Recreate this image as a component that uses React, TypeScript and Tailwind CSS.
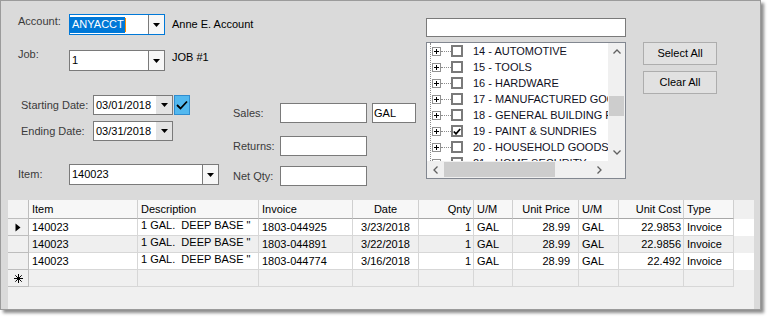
import React from 'react';

const Tri = () => (
  <svg width="7" height="4" viewBox="0 0 7 4">
    <path d="M0 0H7L3.5 4Z" fill="#000" />
  </svg>
);

const Chevron = ({ dir }: { dir: 'up' | 'down' | 'left' | 'right' }) => {
  const pts: Record<string, string> = {
    up: '0.5,4.5 4,1 7.5,4.5',
    down: '0.5,0.5 4,4 7.5,0.5',
    left: '4.5,0.5 1,4 4.5,7.5',
    right: '0.5,0.5 4,4 0.5,7.5',
  };
  const vertical = dir === 'up' || dir === 'down';
  return (
    <svg width={vertical ? 8 : 5} height={vertical ? 5 : 8} viewBox={vertical ? '0 0 8 5' : '0 0 5 8'}>
      <polyline points={pts[dir]} fill="none" stroke="#606060" strokeWidth="1.3" />
    </svg>
  );
};

const Plus = () => (
  <div className="flex h-[9px] w-[9px] shrink-0 items-center justify-center border border-[#919191] bg-white">
    <svg width="7" height="7" viewBox="0 0 7 7">
      <path d="M1 3.5H6M3.5 1V6" stroke="#000" strokeWidth="1" />
    </svg>
  </div>
);

const treeRows = [
  { t: '14 - AUTOMOTIVE', c: false },
  { t: '15 - TOOLS', c: false },
  { t: '16 - HARDWARE', c: false },
  { t: '17 - MANUFACTURED GOODS', c: false },
  { t: '18 - GENERAL BUILDING PRODUCTS', c: false },
  { t: '19 - PAINT & SUNDRIES', c: true },
  { t: '20 - HOUSEHOLD GOODS', c: false },
  { t: '21 - HOME SECURITY', c: false },
];

const cols = [
  { h: 'Item', w: 'w-[109px]', a: 'justify-start pl-[3px]' },
  { h: 'Description', w: 'w-[121px]', a: 'justify-start pl-[3px]' },
  { h: 'Invoice', w: 'w-[94px]', a: 'justify-start pl-[3px]' },
  { h: 'Date', w: 'w-[66px]', a: 'justify-center' },
  { h: 'Qnty', w: 'w-[55px]', a: 'justify-end pr-[2px]' },
  { h: 'U/M', w: 'w-[39px]', a: 'justify-start pl-[3px]' },
  { h: 'Unit Price', w: 'w-[66px]', a: 'justify-end pr-[8px]' },
  { h: 'U/M', w: 'w-[40px]', a: 'justify-start pl-[3px]' },
  { h: 'Unit Cost', w: 'w-[65px]', a: 'justify-end pr-[2px]' },
  { h: 'Type', w: 'w-[50px]', a: 'justify-start pl-[3px]' },
];

const rows = [
  ['140023', '1 GAL.  DEEP BASE "', '1803-044925', '3/23/2018', '1', 'GAL', '28.99', 'GAL', '22.9853', 'Invoice'],
  ['140023', '1 GAL.  DEEP BASE "', '1803-044891', '3/22/2018', '1', 'GAL', '28.99', 'GAL', '22.9856', 'Invoice'],
  ['140023', '1 GAL.  DEEP BASE "', '1803-044774', '3/16/2018', '1', 'GAL', '28.99', 'GAL', '22.492', 'Invoice'],
];

function DateBox({ value }: { value: string }) {
  return (
    <div className="flex h-[20px] w-[80px] shrink-0 border border-[#7a7a7a] bg-white">
      <div className="flex flex-1 items-center pl-[2px] text-black">{value}</div>
      <div className="flex w-[16px] items-center justify-center bg-[#e3e3e3]">
        <Tri />
      </div>
    </div>
  );
}

function TextBox({ w, value }: { w: string; value?: string }) {
  return (
    <div className={`flex h-[20px] shrink-0 items-center border border-[#7a7a7a] bg-white pl-[1px] text-black ${w}`}>
      {value}
    </div>
  );
}

export default function App() {
  return (
    <div className="h-[317px] w-[769px] bg-white font-['Liberation_Sans',Arial,sans-serif] text-[11px] leading-[13px] text-black">
      <div className="flex h-[310px] w-[761px] flex-col border border-[#9b9b9b] bg-[#dadada] shadow-[3px_3px_3px_rgba(0,0,0,0.45)]">
        {/* top area */}
        <div className="flex h-[199px] shrink-0 items-start">
          {/* left column */}
          <div className="flex w-[232px] shrink-0 flex-col">
            {/* Account */}
            <div className="mt-[13px] flex items-start whitespace-nowrap">
              <div className="mt-[1px] w-[68px] shrink-0 pl-[17px] text-[#3a3a3a]">Account:</div>
              <div className="flex h-[21px] w-[96px] shrink-0 border border-[#0078d7] bg-white">
                <div className="flex flex-1 items-center">
                  <span className="flex h-[16px] items-center bg-[#0078d7] pl-[2px] pr-[1px] text-white">ANYACCT</span>
                  <span className="h-[14px] w-[1px] bg-[#ff8c00]" />
                </div>
                <div className="flex w-[16px] items-center justify-center border-l border-[#7a7a7a] bg-[#f7f7f7]">
                  <Tri />
                </div>
              </div>
              <div className="ml-[7px] mt-[4px] shrink-0">Anne E. Account</div>
            </div>
            {/* Job */}
            <div className="mt-[15px] flex items-start whitespace-nowrap">
              <div className="mt-[-2px] w-[68px] shrink-0 pl-[17px] text-[#3a3a3a]">Job:</div>
              <div className="flex h-[21px] w-[96px] shrink-0 border border-[#7a7a7a] bg-white">
                <div className="flex flex-1 items-center pl-[2px]">1</div>
                <div className="flex w-[16px] items-center justify-center border-l border-[#7a7a7a] bg-[#f7f7f7]">
                  <Tri />
                </div>
              </div>
              <div className="ml-[7px] mt-[1px] shrink-0">JOB #1</div>
            </div>
            {/* Starting date */}
            <div className="mt-[24px] flex items-center whitespace-nowrap">
              <div className="w-[92px] shrink-0 pl-[20px] text-[#3a3a3a]">Starting Date:</div>
              <DateBox value="03/01/2018" />
              <div className="ml-[1px] flex h-[20px] w-[16px] shrink-0 items-center justify-center border border-[#2f8ccf] bg-[#52b8ef]">
                <svg width="12" height="10" viewBox="0 0 12 10">
                  <polyline points="1,5 4.5,8.5 11,1.5" fill="none" stroke="#000" strokeWidth="1.8" />
                </svg>
              </div>
            </div>
            {/* Ending date */}
            <div className="mt-[6px] flex items-center whitespace-nowrap">
              <div className="w-[92px] shrink-0 pl-[20px] text-[#3a3a3a]">Ending Date:</div>
              <DateBox value="03/31/2018" />
            </div>
            {/* Item */}
            <div className="mt-[23px] flex items-center whitespace-nowrap">
              <div className="w-[68px] shrink-0 pl-[17px] text-[#3a3a3a]">Item:</div>
              <div className="flex h-[21px] w-[150px] shrink-0 border border-[#7a7a7a] bg-white">
                <div className="flex flex-1 items-center pl-[2px]">140023</div>
                <div className="flex w-[16px] items-center justify-center border-l border-[#7a7a7a] bg-[#f7f7f7]">
                  <Tri />
                </div>
              </div>
            </div>
          </div>

          {/* middle column */}
          <div className="flex w-[183px] shrink-0 flex-col whitespace-nowrap">
            <div className="mt-[102px] flex items-center">
              <div className="w-[47px] shrink-0 text-[#3a3a3a]">Sales:</div>
              <TextBox w="w-[87px]" />
              <div className="ml-[5px] shrink-0">
                <TextBox w="w-[44px]" value="GAL" />
              </div>
            </div>
            <div className="mt-[13px] flex items-center">
              <div className="w-[47px] shrink-0 text-[#3a3a3a]">Returns:</div>
              <TextBox w="w-[87px]" />
            </div>
            <div className="mt-[10px] flex items-center">
              <div className="w-[47px] shrink-0 text-[#3a3a3a]">Net Qty:</div>
              <TextBox w="w-[87px]" />
            </div>
          </div>

          {/* tree column */}
          <div className="ml-[10px] flex w-[200px] shrink-0 flex-col">
            <div className="mt-[17px] h-[19px] w-[200px] border border-[#7a7a7a] bg-white" />
            <div className="mt-[5px] flex h-[137px] w-[200px] flex-col border border-[#828790] bg-white">
              <div className="flex h-[118px]">
                <div className="relative min-w-0 flex-1 overflow-hidden">
                  <div className="absolute bottom-0 left-[3px] top-0 border-l border-dotted border-[#8c8c8c]" />
                  {treeRows.map((r) => (
                    <div key={r.t} className="relative flex h-[16px] items-center whitespace-nowrap pl-[5px]">
                      <Plus />
                      <div className="h-0 w-[10px] shrink-0 border-t border-dotted border-[#8c8c8c]" />
                      <div className="flex h-[12px] w-[12px] shrink-0 items-center justify-center border-2 border-[#7a7a7a] bg-white">
                        {r.c && (
                          <svg width="8" height="7" viewBox="0 0 8 7">
                            <polyline points="0.8,3.5 3,5.8 7.2,1" fill="none" stroke="#000" strokeWidth="1.8" />
                          </svg>
                        )}
                      </div>
                      <span className="ml-[10px] shrink-0 text-[#10101e]">{r.t}</span>
                    </div>
                  ))}
                </div>
                <div className="flex w-[17px] shrink-0 flex-col items-center bg-[#f0f0f0]">
                  <div className="flex h-[17px] w-full items-center justify-center">
                    <Chevron dir="up" />
                  </div>
                  <div className="mt-[36px] h-[20px] w-[15px] bg-[#cdcdcd]" />
                  <div className="flex-1" />
                  <div className="flex h-[17px] w-full items-center justify-center">
                    <Chevron dir="down" />
                  </div>
                </div>
              </div>
              <div className="flex h-[17px]">
                <div className="flex flex-1 items-center bg-[#f0f0f0]">
                  <div className="flex h-[17px] w-[17px] items-center justify-center">
                    <Chevron dir="left" />
                  </div>
                  <div className="h-[15px] w-[111px] bg-[#cdcdcd]" />
                  <div className="flex-1" />
                  <div className="flex h-[17px] w-[17px] items-center justify-center">
                    <Chevron dir="right" />
                  </div>
                </div>
                <div className="w-[17px] bg-[#f0f0f0]" />
              </div>
            </div>
          </div>

          {/* buttons */}
          <div className="ml-[17px] mt-[41px] flex shrink-0 flex-col">
            <button className="flex h-[23px] w-[74px] items-center justify-center border border-[#adadad] bg-[#e1e1e1] text-black">
              Select All
            </button>
            <button className="mt-[6px] flex h-[23px] w-[74px] items-center justify-center border border-[#adadad] bg-[#e1e1e1] text-black">
              Clear All
            </button>
          </div>
        </div>

        {/* grid */}
        <div className="ml-[7px] mr-[6px] flex flex-1 flex-col bg-[#f0f0f0]">
          <div className="flex h-[19px]">
            <div className="w-[21px] shrink-0 border-b border-r border-[#bdbdbd] bg-[#f3f3f3]" />
            {cols.map((c, i) => (
              <div
                key={i}
                className={`flex shrink-0 items-center whitespace-nowrap border-b border-r border-b-[#a8a8a8] border-r-[#cfcfcf] bg-[#f7f7f7] ${c.w} ${c.a}`}
              >
                {c.h}
              </div>
            ))}
          </div>
          {rows.map((r, ri) => (
            <div key={ri} className={`flex h-[17px] ${ri === 1 ? 'bg-[#efefef]' : 'bg-white'}`}>
              <div className="flex w-[21px] shrink-0 items-center justify-center border-b border-r border-[#bdbdbd] bg-[#f0f0f0]">
                {ri === 0 && (
                  <svg width="6" height="9" viewBox="0 0 6 9">
                    <path d="M0.5 0.5L5.5 4.5L0.5 8.5Z" fill="#000" />
                  </svg>
                )}
              </div>
              {cols.map((c, ci) => (
                <div
                  key={ci}
                  className={`flex shrink-0 items-center overflow-hidden whitespace-pre border-b border-r border-[#d7d7d7] ${c.w} ${c.a}`}
                >
                  <span className={ci === 1 ? 'mb-[3px]' : ''}>{r[ci]}</span>
                </div>
              ))}
            </div>
          ))}
          <div className="flex h-[17px] bg-[#f0f0f0]">
            <div className="flex w-[21px] shrink-0 items-center justify-center border-b border-r border-[#bdbdbd] bg-[#f0f0f0]">
              <svg width="9" height="9" viewBox="0 0 9 9">
                <path d="M4.5 0V9M0 4.5H9M1.3 1.3L7.7 7.7M7.7 1.3L1.3 7.7" stroke="#000" strokeWidth="1" />
              </svg>
            </div>
            {cols.map((c, ci) => (
              <div key={ci} className={`shrink-0 border-b border-r border-[#d7d7d7] ${c.w}`} />
            ))}
          </div>
        </div>
      </div>
    </div>
  );
}
